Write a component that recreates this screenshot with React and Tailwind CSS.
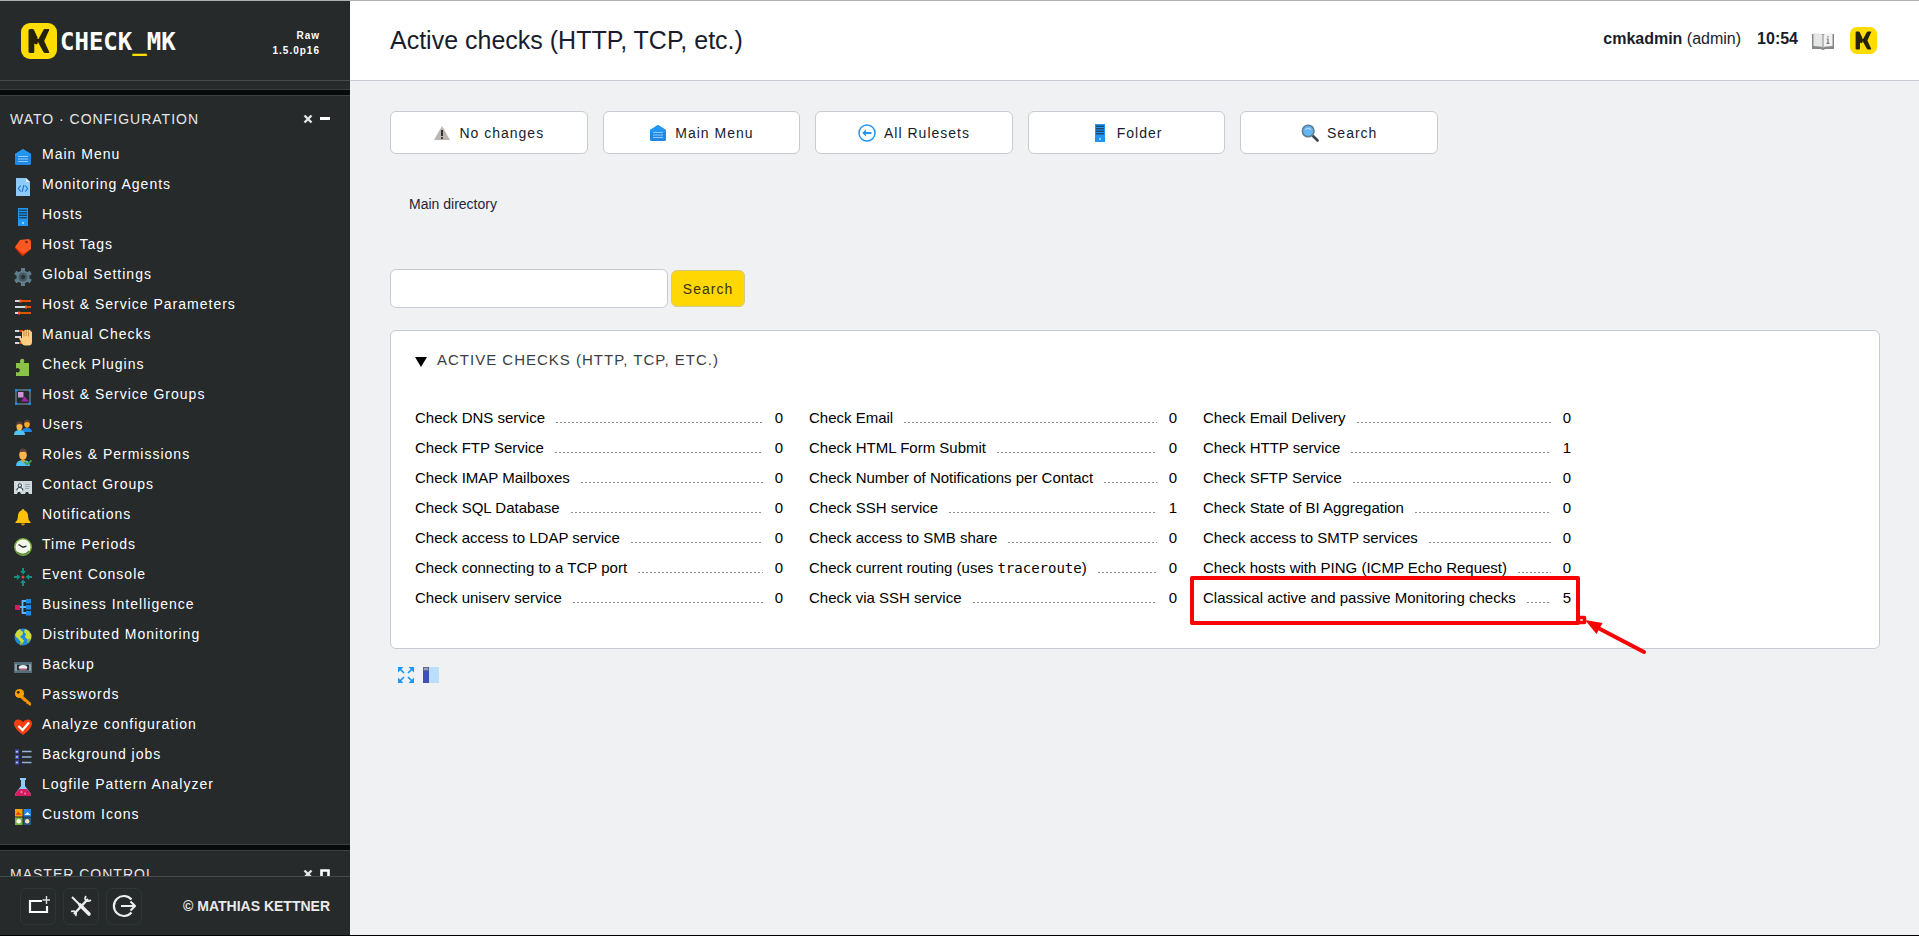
import React from "react";

const Svg = ({ children, className = "w-[18px] h-[18px]", viewBox = "0 0 18 18" }) => (
  <svg className={`shrink-0 ${className}`} viewBox={viewBox} fill="none" aria-hidden="true">
    {children}
  </svg>
);

const LogoMark = ({ className }) => (
  <svg className={`shrink-0 ${className}`} viewBox="0 0 36 36" aria-hidden="true">
    <rect width="36" height="36" rx="9" fill="#ffdd00" />
    <path d="M9 6h2.500q1 0 1.500 1l3.500 7.500v6.500l-1.300.5-1.900-1v8Q13.300 30 12 30H9q-1.500 0-1.500-1.500v-21Q7.500 6 9 6z" fill="#26220a" />
    <path d="M24 6h3.500q1.200 0 .7 1L23.200 18l5 11q.5 1-.7 1H24q-1 0-1.600-1L17.500 20V16L22.400 7q.6-1 1.600-1z" fill="#26220a" />
    <path d="M16 16h3v3.500h-3z" fill="#26220a" />
  </svg>
);

const HomeIcon = () => (
  <Svg>
    <path d="M9 1 17 6v9.500q0 1.500-1.500 1.500h-13Q1 17 1 15.500V6z" fill="#1e88e5" />
    <path d="M9 1 17 6v2H1V6z" fill="#2196f3" />
    <path d="M4 8.500h10M4 11h10M4 13.500h10" stroke="#90caf9" strokeWidth="1" />
  </Svg>
);
const AgentIcon = () => (
  <Svg>
    <path d="M2 0h10l4 4v14H2z" fill="#90caf9" />
    <path d="M12 0v4h4z" fill="#e1f5fe" />
    <path d="M6.800 7.500 4.300 10.500l2.500 3M11.200 7.500l2.500 3-2.500 3M10 7l-2 7" stroke="#1976d2" strokeWidth="1.100" />
  </Svg>
);
const ServerIcon = () => (
  <Svg>
    <path d="M4 0h10v18H4z" fill="#2196f3" />
    <path d="M5 1.500h8v1.500H5zM5 4h8v1.500H5zM5 6.500h8V8H5zM5 9h8v1.500H5z" fill="#1a4a70" />
    <circle cx="9" cy="15" r="1" fill="#bbdefb" />
  </Svg>
);
const TagIcon = () => (
  <Svg>
    <path d="m2 8 9-6 5 1 1 8-8 7-2-1-6-7z" fill="#dd2c00" />
    <path d="M1 9 6 2l9-1 2 2v8l-8 5z" fill="#ff5722" />
    <circle cx="12.500" cy="4" r="1.300" fill="#7a1f06" />
  </Svg>
);
const GearIcon = () => (
  <Svg>
    <g stroke="#607d8b" strokeWidth="4">
      <path d="M9 0v18M1.200 4.500l15.600 9M1.200 13.500l15.600-9" />
    </g>
    <circle cx="9" cy="9" r="6.500" fill="#607d8b" />
    <circle cx="9" cy="9" r="4.500" fill="#455a64" />
    <circle cx="9" cy="9" r="2.200" fill="#2b3438" />
  </Svg>
);
const SlidersIcon = () => (
  <Svg>
    <path d="M1 3h6M1 9h10M1 15h4" stroke="#cfd8dc" strokeWidth="1.800" />
    <path d="M7 3h10M11 9h6M5 15h12" stroke="#e65100" strokeWidth="1.800" />
    <path d="M5.500 1.500h2v3h-2zM11 7.500h2v3h-2zM4 13.500h2v3H4z" fill="#ff5722" />
  </Svg>
);
const HandIcon = () => (
  <Svg>
    <path d="M1 3h5M1 9h6M1 15h4" stroke="#cfd8dc" strokeWidth="1.800" />
    <path d="M5 3h4M5 15h4" stroke="#e64a19" strokeWidth="2.200" />
    <path d="M8 3.500q1-1.500 2 0 1-3 2.200-1 1.300-2 2.300 0 1.800-1.500 2 .5l1.500 1v10q0 3.500-3.500 3.500h-3.500Q9 17.500 7.500 15L5 10q1-1.500 3 .5z" fill="#ffcc80" />
    <path d="M10 3.500v5M12.200 3v5M14.500 3.500v5" stroke="#b97a35" strokeWidth=".8" />
  </Svg>
);
const PuzzleIcon = () => (
  <Svg>
    <path d="M2 5h4.500Q5 3.500 6.500 1.500q2-1.500 3.500 0 1 2-.5 3.500H15v13H2v-4q2.500 1 3.500-.5 1-2-.5-3-1.500-1-3 0z" fill="#8bc34a" />
  </Svg>
);
const GroupIcon = () => (
  <Svg>
    <path d="M2 2h14v14H2z" stroke="#607d8b" strokeWidth="1.400" />
    <path d="M1 1h2.500v2.500H1zM14.500 1H17v2.500h-2.500zM1 14.500h2.500V17H1zM14.500 14.500H17V17h-2.500z" fill="#1e88e5" />
    <path d="M4 4h5.500v5.500H4z" fill="#ce93d8" />
    <path d="m10.500 8.500 4.500 5H7z" fill="#9c27b0" />
  </Svg>
);
const UsersIcon = () => (
  <Svg>
    <path d="M8 14q0-4 5-4t5 4z" fill="#1e88e5" />
    <ellipse cx="13" cy="6" rx="2.800" ry="3.700" fill="#ffa726" />
    <path d="M10 5q0-3.300 3-3.300T16 5l-3-1z" fill="#5d4037" />
    <path d="M0 17q0-5 5.500-5t5.500 5z" fill="#4fc3f7" />
    <ellipse cx="5.500" cy="8.500" rx="3" ry="4" fill="#ffb74d" />
    <path d="M2.300 7q0-3.500 3.200-3.500T8.700 7L5.500 6z" fill="#5d4037" />
  </Svg>
);
const RoleIcon = () => (
  <Svg>
    <path d="M2 18q0-6 7-6t7 6z" fill="#4fc3f7" />
    <path d="m6.500 12 2.500 2.500 2.500-2.500z" fill="#ff9800" />
    <ellipse cx="9" cy="7" rx="3.800" ry="5" fill="#ffb74d" />
    <path d="M5 5.500Q5 .5 9 .5t4 5L11 3.800 6 4z" fill="#5d4037" />
    <path d="m10.500 14 2.500 2.500 4.500-4" stroke="#43a047" strokeWidth="1.900" />
  </Svg>
);
const CardIcon = () => (
  <Svg>
    <path d="M0 3h18v13h-3l-1-2h-2l-1 2H7l-1-2H4l-1 2H0z" fill="#cfd8dc" />
    <path d="M2.500 5h6.500v8H2.500z" fill="#e8eef1" />
    <circle cx="5.800" cy="7.500" r="1.700" stroke="#37474f" strokeWidth="1.100" />
    <path d="M2.800 12.500q0-3 3-3t3 3" stroke="#37474f" strokeWidth="1.100" />
    <path d="M11 6.500h5M11 8.500h5M11 10.500h4" stroke="#90a4ae" strokeWidth=".9" />
  </Svg>
);
const BellIcon = () => (
  <Svg>
    <path d="M9 1q1.300 0 1.500 1.500Q14 3.500 14 8q0 4 2.500 6v1h-15v-1Q4 12 4 8q0-4.500 3.500-5.500Q7.700 1 9 1z" fill="#ffc107" />
    <path d="M7 15.500h4q-.5 2-2 2t-2-2z" fill="#ff8f00" />
  </Svg>
);
const ClockIcon = () => (
  <Svg>
    <circle cx="9" cy="9" r="8.200" fill="#fff" stroke="#7cb342" strokeWidth="1.500" />
    <path d="M15 13a8 8 0 0 1-12 1" stroke="#558b2f" strokeWidth="1.500" />
    <circle cx="9" cy="9" r="6.300" fill="#f1f8e9" />
    <path d="m4.500 6.500 4.500 2.700 3.500-1" stroke="#222" strokeWidth="1.300" />
  </Svg>
);
const EventIcon = () => (
  <Svg>
    <path
      d="M8 0h2v3h2L9 6.500 6 3h2zM8 18h2v-3h2l-3-3.500L6 15h2zM0 8v2h3v2l3.500-3L3 6v2zM18 8v2h-3v2l-3.500-3L15 6v2z"
      fill="#0d9284"
    />
    <circle cx="9" cy="9" r="1.500" fill="#f44336" />
  </Svg>
);
const TreeIcon = () => (
  <Svg>
    <path d="M4 9h5M13 3H8.500v12H13M8 9h5" stroke="#64b5f6" strokeWidth="1.800" />
    <path d="M1 7h5v5H1z" fill="#d81b60" />
    <path d="M12 1h5v4.500h-5zM12 7h5v4.500h-5zM12 13h5v4.500h-5z" fill="#1e88e5" />
  </Svg>
);
const GlobeIcon = () => (
  <Svg>
    <circle cx="9" cy="9" r="8.500" fill="#1e88e5" />
    <path d="M6 1 3 3 1 7l1 2 2 1.500L6 13l.5 4.500L9 15l1-2.500L7.500 10 6 8.500 8.500 7 9 4 7 2.500zM11 1l-1 3 2 2-1 3 2 2 1 4 3-4 .5-4L15 3z" fill="#cddc39" />
    <path d="M9 15.500 6 13l.5 4.500zM13 11l1 4 3-4z" fill="#7cb342" />
  </Svg>
);
const BackupIcon = () => (
  <Svg>
    <path d="M0 4h18v11H0z" fill="#546e7a" />
    <path d="M3 7h12v5H3z" fill="#263238" />
    <path d="M2 6v7M16 6v7" stroke="#b0bec5" strokeWidth="1.200" />
    <ellipse cx="9" cy="9.500" rx="4.200" ry="2.600" fill="#eceff1" />
    <path d="M5 10.500h8l-1.500 2h-5z" fill="#ad5a78" />
  </Svg>
);
const KeyIcon = () => (
  <Svg>
    <path d="m8 7 9 8v2.500h-2L14 16l-1.500-.3-.5-1.700-1.500-.3L6.500 10z" fill="#f59100" />
    <circle cx="5.500" cy="5.500" r="4.600" fill="#ffa000" />
    <circle cx="4.300" cy="4.300" r="1.400" fill="#26292a" />
  </Svg>
);
const HeartIcon = () => (
  <Svg>
    <path d="M9 17Q0 10.500 0 6q0-4.300 4.300-4.500Q7.500 1.500 9 4q1.500-2.500 4.700-2.500Q18 1.700 18 6q0 4.500-9 11z" fill="#f4400f" />
    <path d="m4.500 8 4 4 6.500-7.500" stroke="#fff" strokeWidth="2.300" />
  </Svg>
);
const JobsIcon = () => (
  <Svg>
    <path d="M1 1.500h4v4H1zM1 7h4v4H1zM1 12.500h4v4H1z" fill="#3f51b5" />
    <path d="M2.200 3h1.500v1.500H2.200zM2.200 8.300h1.500v1.500H2.200zM2.200 13.800h1.500v1.500H2.200z" fill="#e8eaf6" />
    <path d="M8 3.500h9.500M8 9h9.500M8 14.500h9.500" stroke="#90b4d8" strokeWidth="1.700" />
  </Svg>
);
const FlaskIcon = () => (
  <Svg>
    <path d="M6 0h6v2h-1v6l6 8q.3 2-1.500 2h-13Q.700 18 1 16l6-8V2H6z" fill="#90caf9" />
    <path d="M5.300 11h7.400l4.300 5q.3 2-1.500 2h-13Q.7 18 1 16z" fill="#d81b60" />
    <circle cx="7.500" cy="14" r="1" fill="#f48fb1" />
    <circle cx="11" cy="15.500" r=".9" fill="#f48fb1" />
  </Svg>
);
const CustomIcon = () => (
  <Svg>
    <path d="M1 1h7.500v7.500H1z" fill="#ffa000" />
    <path d="m1.500 7 2.500-3.500 2 2 2 1.500z" fill="#dd4b12" />
    <path d="M9.500 1H17v7.500H9.500z" fill="#1e88e5" />
    <path d="m10.500 7 3-3 3 3z" fill="#e3f2fd" />
    <path d="M1 9.500h7.500V17H1z" fill="#7cb342" />
    <circle cx="4.700" cy="13.200" r="2.300" fill="#f9fbe7" />
    <path d="M9.500 9.500H17V17H9.500z" fill="#245a85" />
    <circle cx="13.200" cy="13.200" r="2.200" fill="#ffe0b2" />
  </Svg>
);
const WarnIcon = () => (
  <Svg>
    <path d="M9 2 17 16H1z" fill="#bcb6b3" />
    <path d="M9 6v6M9 13.300v1.700" stroke="#333" strokeWidth="2" />
  </Svg>
);
const BackIcon = () => (
  <Svg>
    <circle cx="9" cy="9" r="8" stroke="#2196f3" strokeWidth="1.500" fill="#fff" />
    <path d="M6 9h7.500" stroke="#2196f3" strokeWidth="2" />
    <path d="M4.200 9 8 5.500v7z" fill="#2196f3" />
  </Svg>
);
const LensIcon = () => (
  <Svg>
    <path d="m11 11 2 2" stroke="#78909c" strokeWidth="2" />
    <path d="m12.500 12.500 4 4" stroke="#37474f" strokeWidth="2.600" strokeLinecap="round" />
    <circle cx="7.200" cy="7" r="5.800" fill="#64b5f6" stroke="#607d8b" strokeWidth="1.600" />
    <path d="M4.500 5.500q2.700-2 5.400 0" stroke="#bbdefb" strokeWidth="1.200" />
  </Svg>
);

const NAV = [
  ["Main Menu", HomeIcon],
  ["Monitoring Agents", AgentIcon],
  ["Hosts", ServerIcon],
  ["Host Tags", TagIcon],
  ["Global Settings", GearIcon],
  ["Host & Service Parameters", SlidersIcon],
  ["Manual Checks", HandIcon],
  ["Check Plugins", PuzzleIcon],
  ["Host & Service Groups", GroupIcon],
  ["Users", UsersIcon],
  ["Roles & Permissions", RoleIcon],
  ["Contact Groups", CardIcon],
  ["Notifications", BellIcon],
  ["Time Periods", ClockIcon],
  ["Event Console", EventIcon],
  ["Business Intelligence", TreeIcon],
  ["Distributed Monitoring", GlobeIcon],
  ["Backup", BackupIcon],
  ["Passwords", KeyIcon],
  ["Analyze configuration", HeartIcon],
  ["Background jobs", JobsIcon],
  ["Logfile Pattern Analyzer", FlaskIcon],
  ["Custom Icons", CustomIcon],
];

const ACTIONS = [
  ["No changes", WarnIcon],
  ["Main Menu", HomeIcon],
  ["All Rulesets", BackIcon],
  ["Folder", ServerIcon],
  ["Search", LensIcon],
];

const RULESETS = [
  ["Check DNS service", 0],
  ["Check Email", 0],
  ["Check Email Delivery", 0],
  ["Check FTP Service", 0],
  ["Check HTML Form Submit", 0],
  ["Check HTTP service", 1],
  ["Check IMAP Mailboxes", 0],
  ["Check Number of Notifications per Contact", 0],
  ["Check SFTP Service", 0],
  ["Check SQL Database", 0],
  ["Check SSH service", 1],
  ["Check State of BI Aggregation", 0],
  ["Check access to LDAP service", 0],
  ["Check access to SMB share", 0],
  ["Check access to SMTP services", 0],
  ["Check connecting to a TCP port", 0],
  [
    <>
      Check current routing (uses{" "}
      <code className="font-['DejaVu_Sans_Mono',monospace] text-[14px] leading-none">traceroute</code>)
    </>,
    0,
  ],
  ["Check hosts with PING (ICMP Echo Request)", 0],
  ["Check uniserv service", 0],
  ["Check via SSH service", 0],
  ["Classical active and passive Monitoring checks", 5, true],
];

const Divider = () => <div className="h-[7px] shrink-0 border-y border-[#3b3f40] bg-[#080b0c]" />;

function SnapinHeader({ title, closed }) {
  return (
    <div className="flex items-center justify-between pl-[10px] pr-5">
      <h2 className="text-sm leading-5 tracking-[1px] text-[#e6e6e6]">{title}</h2>
      <div className="flex items-center gap-[7px]">
        <button type="button" aria-label={`Remove ${title}`}>
          <Svg className="h-[10px] w-[10px]" viewBox="0 0 10 10">
            <path d="m1.500 1.500 7 7m0-7-7 7" stroke="#e6e6e6" strokeWidth="2.400" />
          </Svg>
        </button>
        <button type="button" aria-label={`Toggle ${title}`}>
          <Svg className="h-[10px] w-[10px]" viewBox="0 0 10 10">
            {closed ? (
              <path d="M1.500 1.500h7v7h-7z" stroke="#fff" strokeWidth="2.600" />
            ) : (
              <path d="M0 3h10v3H0z" fill="#fff" />
            )}
          </Svg>
        </button>
      </div>
    </div>
  );
}

function FooterButton({ label, children }) {
  return (
    <button
      type="button"
      aria-label={label}
      className="flex h-[37px] w-9 items-center justify-center rounded-md border border-[#303637]"
    >
      <Svg className="h-6 w-6" viewBox="0 0 24 24">
        {children}
      </Svg>
    </button>
  );
}

function Sidebar() {
  return (
    <aside className="flex h-[calc(100vh-2px)] w-[350px] shrink-0 flex-col bg-[#262a2b] text-white">
      <div className="flex h-20 shrink-0 items-center justify-between border-b border-[#484c4e] pl-[21px] pr-[30px]">
        <a href="#main" className="flex items-center gap-[3px]">
          <LogoMark className="h-9 w-9" />
          <span className="pt-[3px] font-['DejaVu_Sans_Mono',monospace] text-2xl font-bold leading-9">
            CHECK<span className="text-[#ffdd00]">_</span>MK
          </span>
        </a>
        <div className="pt-1 text-right text-[10px] font-bold leading-[15px] tracking-[1px]">
          <div>Raw</div>
          <div>1.5.0p16</div>
        </div>
      </div>
      <div className="flex min-h-0 flex-1 flex-col overflow-hidden">
        <div className="h-2 shrink-0" />
        <Divider />
        <section className="shrink-0 pb-[15px] pt-[13px]">
          <SnapinHeader title="WATO · CONFIGURATION" />
          <ul className="pt-[10px]">
            {NAV.map(([label, Icon]) => (
              <li key={label}>
                <a href="#nav" className="flex h-[30px] gap-[10px] pl-[14px]">
                  <span className="pt-[9px]">
                    <Icon />
                  </span>
                  <span className="pt-[3px] text-sm leading-6 tracking-[1px]">{label}</span>
                </a>
              </li>
            ))}
          </ul>
        </section>
        <Divider />
        <section className="shrink-0 pt-[13px]">
          <SnapinHeader title="MASTER CONTROL" closed />
        </section>
      </div>
      <div className="flex h-[59px] shrink-0 items-center justify-between border-t border-[#484c4e] pl-5 pr-5">
        <div className="flex gap-[7px]">
          <FooterButton label="Add snapin">
            <path d="M16 7H4v11h17v-6" stroke="#fff" strokeWidth="2.200" />
            <path d="M20.500 2v8M16.500 6h7.500" stroke="#ddd" strokeWidth="1.400" />
          </FooterButton>
          <FooterButton label="User settings">
            <path d="M3 3l8 8" stroke="#eee" strokeWidth="2" />
            <path d="m11 11 9 9" stroke="#eee" strokeWidth="3.600" strokeLinecap="round" />
            <path d="M5 20 19 5" stroke="#eee" strokeWidth="2.400" />
            <path d="M17 2q-2 3 0 4.500t5-.5M2 17.500q3-1 4.500.5t0 4" stroke="#eee" strokeWidth="1.600" />
          </FooterButton>
          <FooterButton label="Log out">
            <path d="M19.500 5.500a10 10 0 1 0 0 13" stroke="#eee" strokeWidth="2.200" />
            <path d="M9 12h14M18.500 7.500 23 12l-4.500 4.500" stroke="#eee" strokeWidth="2" />
          </FooterButton>
        </div>
        <a href="#about" className="text-sm font-bold text-[#eaeaea]">
          © MATHIAS KETTNER
        </a>
      </div>
    </aside>
  );
}

const Highlight = () => (
  <svg
    className="pointer-events-none absolute -left-[13px] -top-2 h-[82px] w-[460px]"
    viewBox="0 0 460 82"
    fill="none"
    aria-hidden="true"
  >
    <path d="M2 3h386v45H2z" stroke="#f80204" strokeWidth="4" strokeLinejoin="round" />
    <path d="M388.500 42.500h6v5h-6z" stroke="#f80204" strokeWidth="3.500" strokeLinejoin="round" />
    <path d="M410 54 454 77" stroke="#f80204" strokeWidth="4" strokeLinecap="round" />
    <path d="m395 45 17.500 3-6 11z" fill="#f80204" />
  </svg>
);

export default function App() {
  return (
    <div className="flex min-h-screen border-b border-t border-b-black border-t-[#b0b0b0] bg-[#eff1f3] font-['Liberation_Sans',Arial,sans-serif] text-[#181c2c]">
      <Sidebar />
      <main id="main" className="min-w-0 flex-1">
        <header className="flex h-20 items-center justify-between border-b border-[#c8cbd3] bg-white pl-10 pr-[42px]">
          <h1 className="text-[25px]">Active checks (HTTP, TCP, etc.)</h1>
          <div className="flex items-center text-base">
            <span className="pb-1">
              <b>cmkadmin</b> (admin)
            </span>
            <b className="pb-1 pl-4">10:54</b>
            <a href="#docs" aria-label="Documentation" className="pl-[14px]">
              <Svg className="h-[18px] w-[22px]" viewBox="0 0 22 18">
                <path d="M0 2h22v15H13q-2 2-4 0H0z" fill="#85888a" />
                <path d="M1.500 1Q8 1 11 3v12.500Q8 14 1.500 14z" fill="#e6e6e6" />
                <path d="M20.500 1Q14 1 11 3v12.500Q14 14 20.500 14z" fill="#f2f2f2" />
                <path d="M11 3v12.500" stroke="#8a8a8a" />
                <path d="M16 4v1.500M14.800 7H16v4m-1.500.3h3" stroke="#777" strokeWidth="1.200" />
              </Svg>
            </a>
            <a href="#home" aria-label="Home" className="pl-4">
              <LogoMark className="h-[27px] w-[27px]" />
            </a>
          </div>
        </header>

        <div className="pb-6 pl-10 pr-[39px] pt-[30px]">
          <nav className="grid max-w-[1048px] grid-cols-5 gap-[15px]">
            {ACTIONS.map(([label, Icon]) => (
              <a
                key={label}
                href="#action"
                className="flex h-[43px] items-center justify-center gap-2 rounded-md border border-[#c8cbd3] bg-white text-sm tracking-[1px]"
              >
                <Icon />
                {label}
              </a>
            ))}
          </nav>

          <div className="pl-[19px] pt-10 text-sm text-[#24243e]">
            <a href="#dir">Main directory</a>
          </div>

          <form className="flex items-center gap-[3px] pt-[55px]" onSubmit={(e) => e.preventDefault()}>
            <input
              type="text"
              aria-label="Search rulesets"
              className="h-[39px] w-[278px] rounded-md border border-[#c8cbd3] bg-white px-2 text-[15px]"
            />
            <button
              type="submit"
              className="h-[37px] w-[74px] rounded-md border border-[#d5c98a] bg-[#ffd703] text-sm tracking-[1px] text-[#3a3210]"
            >
              Search
            </button>
          </form>

          <section className="mt-[22px] rounded-md border border-[#c8cbd3] bg-white px-6 pb-[35px] pt-[19px]">
            <button type="button" aria-expanded="true" className="flex items-center gap-[10px] text-[#3a3e42]">
              <Svg className="mt-[3px] h-[10px] w-[12px]" viewBox="0 0 12 10">
                <path d="M0 0h12L6 10z" fill="#000" />
              </Svg>
              <h2 className="text-[15px] leading-5 tracking-[1px]">ACTIVE CHECKS (HTTP, TCP, ETC.)</h2>
            </button>
            <ul className="grid grid-cols-[repeat(auto-fill,368px)] gap-x-[26px] pt-[33px] text-[15px] leading-[30px] text-black lg:grid-cols-[368px_368px_368px]">
              {RULESETS.map(([label, count, marked], i) => (
                <li key={i} className="relative">
                  <a href="#ruleset" className="flex h-[30px] items-baseline">
                    <span className="shrink-0 whitespace-nowrap">{label}</span>
                    <span
                      aria-hidden="true"
                      className="ml-[11px] mr-3 h-px min-w-0 flex-1 bg-[repeating-linear-gradient(to_right,#8c8c8c_0_2px,transparent_2px_4px)]"
                    />
                    <span className="shrink-0">{count}</span>
                  </a>
                  {marked && <Highlight />}
                </li>
              ))}
            </ul>
          </section>

          <div className="flex gap-[9px] pl-2 pt-[18px]">
            <button type="button" aria-label="Full screen">
              <Svg className="h-4 w-4" viewBox="0 0 16 16">
                <path d="m1 1 5 5M15 1l-5 5M1 15l5-5M15 15l-5-5" stroke="#2196f3" strokeWidth="1.700" />
                <path d="M0 0h5.500L0 5.500zM16 0v5.500L10.500 0zM0 16v-5.500L5.500 16zM16 16h-5.500l5.500-5.500z" fill="#2196f3" />
              </Svg>
            </button>
            <button type="button" aria-label="Toggle sidebar">
              <Svg className="h-4 w-4" viewBox="0 0 16 16">
                <path d="M6 0h10v16H6z" fill="#bbdefb" />
                <path d="M0 0h6v16H0z" fill="#3f51b5" />
                <path d="M.5.500h5v3h-5z" fill="#7e8390" />
                <path d="M1.500 2h1M3.500 2h1" stroke="#fff" strokeWidth="1" />
              </Svg>
            </button>
          </div>
        </div>
      </main>
    </div>
  );
}
